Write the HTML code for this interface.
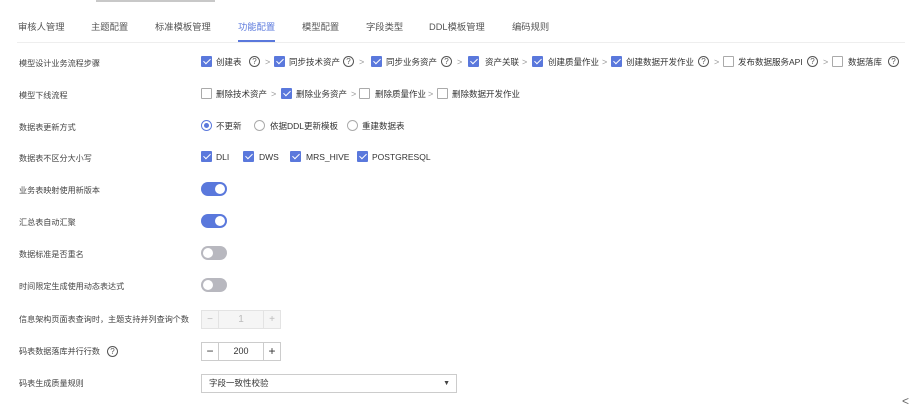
<!DOCTYPE html>
<html><head><meta charset="utf-8"><style>
*{box-sizing:border-box;margin:0;padding:0}
body{width:911px;height:409px;background:#fff;font-family:"Liberation Sans","Noto Sans CJK SC",sans-serif;font-size:8.5px;color:#333;position:relative;overflow:hidden}
.a{position:absolute;white-space:nowrap;line-height:12px}
.tab{position:absolute;top:21px;font-size:9.3px;color:#555;line-height:12px}
.lbl{position:absolute;left:19px;color:#444;line-height:12px;font-size:8.1px;white-space:nowrap}
.cb{position:absolute;width:11px;height:11px;border:1px solid #aaa;border-radius:1px;background:#fff}
.cb.on{background:#5a78dc;border-color:#5a78dc}
.cb.on::after{content:"";position:absolute;left:3px;top:0px;width:3px;height:6px;border:solid #fff;border-width:0 1.5px 1.5px 0;transform:rotate(45deg)}
.q{position:absolute;width:11px;height:11px;border:1px solid #555;border-radius:50%;font-size:8px;line-height:9px;text-align:center;color:#555}
.gt{position:absolute;color:#999;font-size:9px;line-height:12px}
.rd{position:absolute;width:11px;height:11px;border:1px solid #aaa;border-radius:50%}
.rd.on{border-color:#5a78dc}
.rd.on::after{content:"";position:absolute;left:2px;top:2px;width:5px;height:5px;border-radius:50%;background:#5a78dc}
.tg{position:absolute;left:201px;width:26px;height:14px;border-radius:7px;background:#5a78dc}
.tg::after{content:"";position:absolute;top:2px;right:2px;width:10px;height:10px;border-radius:50%;background:#fff}
.tg.off{background:#b8b8bf}.tg.off::after{right:auto;left:2px}
</style></head><body>
<div style="position:absolute;left:96px;top:0;width:119px;height:2px;background:#c8c8c8"></div>
<div class="tab" style="left:18px">审核人管理</div>
<div class="tab" style="left:91px">主题配置</div>
<div class="tab" style="left:155px">标准模板管理</div>
<div class="tab" style="left:238px;color:#5a78dc">功能配置</div>
<div class="tab" style="left:302px">模型配置</div>
<div class="tab" style="left:366px">字段类型</div>
<div class="tab" style="left:429px">DDL模板管理</div>
<div class="tab" style="left:512px">编码规则</div>
<div style="position:absolute;left:17px;top:42px;width:888px;height:1px;background:#eee"></div>
<div style="position:absolute;left:238px;top:40px;width:37px;height:2px;background:#5a78dc"></div>

<div class="lbl" style="top:58px">模型设计业务流程步骤</div>
<div class="cb on" style="left:201px;top:56px"></div><div class="a" style="left:216px;top:56px">创建表</div><div class="q" style="left:249px;top:56px">?</div><div class="gt" style="left:265px;top:56px">&gt;</div>
<div class="cb on" style="left:274px;top:56px"></div><div class="a" style="left:289px;top:56px">同步技术资产</div><div class="q" style="left:343px;top:56px">?</div><div class="gt" style="left:359px;top:56px">&gt;</div>
<div class="cb on" style="left:371px;top:56px"></div><div class="a" style="left:386px;top:56px">同步业务资产</div><div class="q" style="left:441px;top:56px">?</div><div class="gt" style="left:457px;top:56px">&gt;</div>
<div class="cb on" style="left:468px;top:56px"></div><div class="a" style="left:485px;top:56px">资产关联</div><div class="gt" style="left:522px;top:56px">&gt;</div>
<div class="cb on" style="left:532px;top:56px"></div><div class="a" style="left:548px;top:56px">创建质量作业</div><div class="gt" style="left:602px;top:56px">&gt;</div>
<div class="cb on" style="left:611px;top:56px"></div><div class="a" style="left:626px;top:56px">创建数据开发作业</div><div class="q" style="left:698px;top:56px">?</div><div class="gt" style="left:714px;top:56px">&gt;</div>
<div class="cb" style="left:723px;top:56px"></div><div class="a" style="left:738px;top:56px">发布数据服务API</div><div class="q" style="left:807px;top:56px">?</div><div class="gt" style="left:823px;top:56px">&gt;</div>
<div class="cb" style="left:832px;top:56px"></div><div class="a" style="left:848px;top:56px">数据落库</div><div class="q" style="left:888px;top:56px">?</div>

<div class="lbl" style="top:90px">模型下线流程</div>
<div class="cb" style="left:201px;top:88px"></div><div class="a" style="left:216px;top:88px">删除技术资产</div><div class="gt" style="left:271px;top:88px">&gt;</div>
<div class="cb on" style="left:281px;top:88px"></div><div class="a" style="left:296px;top:88px">删除业务资产</div><div class="gt" style="left:351px;top:88px">&gt;</div>
<div class="cb" style="left:359px;top:88px"></div><div class="a" style="left:375px;top:88px">删除质量作业</div><div class="gt" style="left:428px;top:88px">&gt;</div>
<div class="cb" style="left:437px;top:88px"></div><div class="a" style="left:452px;top:88px">删除数据开发作业</div>

<div class="lbl" style="top:122px">数据表更新方式</div>
<div class="rd on" style="left:201px;top:120px"></div><div class="a" style="left:216px;top:120px">不更新</div>
<div class="rd" style="left:254px;top:120px"></div><div class="a" style="left:270px;top:120px">依据DDL更新模板</div>
<div class="rd" style="left:347px;top:120px"></div><div class="a" style="left:362px;top:120px">重建数据表</div>

<div class="lbl" style="top:153px">数据表不区分大小写</div>
<div class="cb on" style="left:201px;top:151px"></div><div class="a" style="left:216px;top:151px">DLI</div>
<div class="cb on" style="left:243px;top:151px"></div><div class="a" style="left:259px;top:151px">DWS</div>
<div class="cb on" style="left:290px;top:151px"></div><div class="a" style="left:306px;top:151px">MRS_HIVE</div>
<div class="cb on" style="left:357px;top:151px"></div><div class="a" style="left:372px;top:151px">POSTGRESQL</div>

<div class="lbl" style="top:185px">业务表映射使用新版本</div><div class="tg" style="top:182px"></div>
<div class="lbl" style="top:217px">汇总表自动汇聚</div><div class="tg" style="top:214px"></div>
<div class="lbl" style="top:249px">数据标准是否重名</div><div class="tg off" style="top:246px"></div>
<div class="lbl" style="top:281px">时间限定生成使用动态表达式</div><div class="tg off" style="top:278px"></div>

<div class="lbl" style="top:314px">信息架构页面表查询时，主题支持并列查询个数</div>
<div style="position:absolute;left:201px;top:310px;width:80px;height:19px;border:1px solid #e3e3e3;background:#f5f5f5;display:flex;color:#bbb;font-size:10px;line-height:17px;text-align:center">
<div style="width:17px;border-right:1px solid #e3e3e3">−</div><div style="flex:1">1</div><div style="width:17px;border-left:1px solid #e3e3e3">+</div></div>

<div class="lbl" style="top:346px">码表数据落库并行行数</div><div class="q" style="left:107px;top:346px">?</div>
<div style="position:absolute;left:201px;top:342px;width:80px;height:19px;border:1px solid #ccc;display:flex;color:#333;font-size:9px;line-height:17px;text-align:center">
<div style="width:17px;border-right:1px solid #ccc;font-size:12px">−</div><div style="flex:1">200</div><div style="width:17px;border-left:1px solid #ccc;font-size:12px">+</div></div>

<div class="lbl" style="top:378px">码表生成质量规则</div>
<div style="position:absolute;left:201px;top:374px;width:256px;height:19px;border:1px solid #ccc;padding-left:7px;line-height:17px;color:#333">字段一致性校验<span style="position:absolute;right:6px;top:0;font-size:7px;color:#444">▼</span></div>
<div class="a" style="left:902px;top:395px;color:#666;font-size:12px">&lt;</div>
</body></html>
